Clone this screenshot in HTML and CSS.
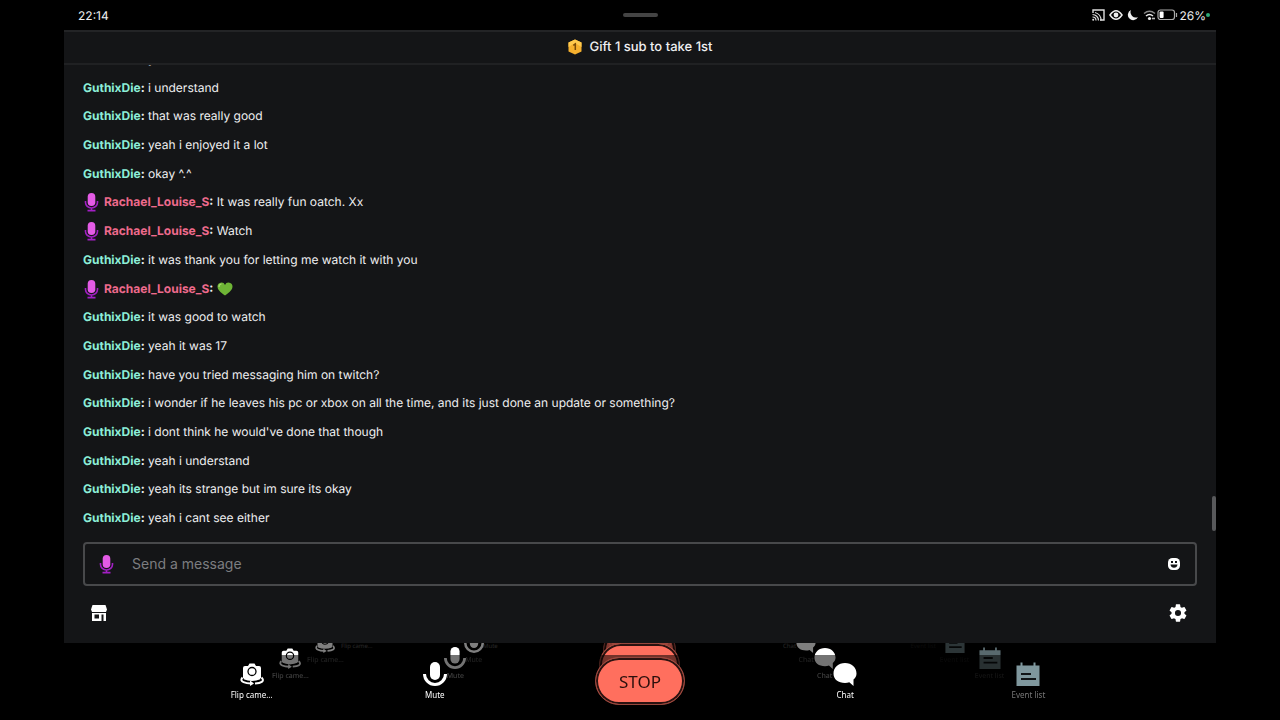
FILE: index.html
```html
<!DOCTYPE html>
<html lang="en">
<head>
    <meta charset="UTF-8">
    <meta name="viewport" content="width=device-width, initial-scale=1.0">
    <title>Stream Chat</title>
    <link rel="stylesheet" href="styles.css">
</head>
<body>
    <!-- Shared icons -->
    <svg class="sprite" aria-hidden="true">
        <symbol id="badge-mic" viewBox="0 0 16 20">
            <path d="M2 9v1.500a6 5.500 0 0 0 12 0V9M8 16v2.500M4 18.600h8" fill="none" stroke="#a21fc4" stroke-width="1.600"/>
            <rect x="4.200" y="1" width="7.600" height="13" rx="3.800" fill="#e45be6"/>
        </symbol>
        <symbol id="flip" viewBox="0 0 24 24">
            <path d="M5 4h3l1.500-2.500h5L16 4h3q2 0 2 2v11q-4.500 2-9 2t-9-2V6q0-2 2-2z" fill="currentColor"/>
            <circle cx="12" cy="9.500" r="4" fill="none" stroke="#000" stroke-width="1.300"/>
            <path d="M2.500 15.500c-4 4.500 4 6 9.500 6s13.500-1.500 9.500-6" fill="none" stroke="#000" stroke-width="4"/>
            <path d="M2.500 15.500c-4 4.500 4 6 8.500 6M21.500 15.500c4 4-1 5.500-6.500 6" fill="none" stroke="currentColor" stroke-width="2"/>
            <path d="M10 18.500l4 3-4 2.500z" fill="currentColor"/>
        </symbol>
        <symbol id="mic" viewBox="0 0 24 24">
            <rect x="7" y="0" width="10" height="18" rx="5" fill="currentColor"/>
            <path d="M1.500 12a10.500 10.500 0 0 0 21 0" fill="none" stroke="currentColor" stroke-width="3"/>
        </symbol>
        <symbol id="bubble" viewBox="0 0 24 24">
            <path d="M12 1C5.400 1 .5 5.500.5 11.500S5.400 21 12 21c1.500 0 3-.3 4.300-.7L20.500 24v-6.500c2-1.700 3-3.600 3-6C23.500 5.500 18.600 1 12 1z" fill="currentColor"/>
        </symbol>
        <symbol id="events" viewBox="0 0 24 24">
            <path d="M.5 3.500h4V.5h2v3h11v-3h2v3h4V24H.5z" fill="currentColor"/>
            <path d="M5 12h10M5 17h15" stroke="#101416" stroke-width="2"/>
        </symbol>
    </svg>

    <header class="status-bar">
        <time class="clock">22:14</time>
        <span class="handle"></span>
        <div class="status-icons">
            <svg width="13" height="12" viewBox="0 0 13 12" aria-label="Casting">
                <path d="M1 4V1h11v10H8" fill="none" stroke="#ddd" stroke-width="1.400"/>
                <path d="M.5 5.500a6 6 0 0 1 6 6M.5 8a3.500 3.500 0 0 1 3.500 3.500M3 3.500a8 8 0 0 1 6 8" fill="none" stroke="#ddd" stroke-width="1.200"/>
                <circle cx="1.200" cy="10.800" r="1" fill="#ddd"/>
            </svg>
            <svg width="14" height="12" viewBox="0 0 14 12" aria-label="Eye comfort">
                <path d="M1 6q6-8.500 12 0q-6 8.500-12 0z" fill="none" stroke="#eee" stroke-width="1.500"/>
                <circle cx="7" cy="6" r="2.400" fill="#eee"/>
            </svg>
            <svg width="12" height="12" viewBox="0 0 12 12" aria-label="Do not disturb">
                <path d="M4 1a5.300 5.300 0 1 0 7 7A5.300 5.300 0 0 1 4 1z" fill="#eee"/>
            </svg>
            <svg width="13" height="12" viewBox="0 0 13 12" aria-label="Wi-Fi">
                <path d="M1 4.500q5.500-4.500 11 0" fill="none" stroke="#888" stroke-width="1.400"/>
                <path d="M3 7q3.500-3 7 0" fill="none" stroke="#eee" stroke-width="1.500"/>
                <circle cx="6.500" cy="9.500" r="1.600" fill="#eee"/>
                <path d="M9 9.500h3" stroke="#bbb" stroke-width="1.600"/>
            </svg>
            <svg class="battery" width="21" height="12" viewBox="0 0 21 12" aria-label="Battery">
                <rect x="1" y="1" width="16.500" height="9.500" rx="2.500" fill="none" stroke="#aaa" stroke-width="1.200"/>
                <rect x="2.600" y="2.600" width="4" height="6.300" rx="1" fill="#fff"/>
                <path d="M19.500 4v4" stroke="#aaa" stroke-width="1.200"/>
            </svg>
            <span class="percent">26%</span>
            <span class="dot"></span>
        </div>
    </header>

    <main class="panel">
        <div class="gift-bar">
            <svg width="14" height="16" viewBox="0 0 14 16" aria-hidden="true">
                <path d="M7 .5l6.500 3v9L7 15.500.5 12.500v-9z" fill="#f6b02e"/>
                <path d="M7 .5l6.500 3v4.500L7 4 .5 8V3.500z" fill="#ffc94d"/>
                <path d="M5.300 6.300L7.300 5v6" fill="none" stroke="#7a4a08" stroke-width="1.500"/>
            </svg>
            <span>Gift 1 sub to take 1st</span>
        </div>

        <div class="chat-log">
            <ol class="messages">
                <li><b class="name guthix">GuthixDie</b><b>:</b> yes</li>
                <li><b class="name guthix">GuthixDie</b><b>:</b> i understand</li>
                <li><b class="name guthix">GuthixDie</b><b>:</b> that was really good</li>
                <li><b class="name guthix">GuthixDie</b><b>:</b> yeah i enjoyed it a lot</li>
                <li><b class="name guthix">GuthixDie</b><b>:</b> okay ^.^</li>
                <li><svg class="badge"><use href="#badge-mic"/></svg><b class="name rachael">Rachael_Louise_S</b><b>:</b> It was really fun oatch. Xx</li>
                <li><svg class="badge"><use href="#badge-mic"/></svg><b class="name rachael">Rachael_Louise_S</b><b>:</b> Watch</li>
                <li><b class="name guthix">GuthixDie</b><b>:</b> it was thank you for letting me watch it with you</li>
                <li><svg class="badge"><use href="#badge-mic"/></svg><b class="name rachael">Rachael_Louise_S</b><b>:</b>
                    <svg class="heart" viewBox="0 0 16 14" role="img" aria-label="green heart">
                        <path d="M8 13.500C3 10 .5 7.500.5 4.500a3.900 3.900 0 0 1 7.500-1.500 3.900 3.900 0 0 1 7.500 1.500c0 3-2.500 5.500-7.500 9z" fill="#6fb536"/>
                        <path d="M2 5q0-2.800 2.500-3" fill="none" stroke="#a3d86b" stroke-width="1.200"/>
                    </svg>
                </li>
                <li><b class="name guthix">GuthixDie</b><b>:</b> it was good to watch</li>
                <li><b class="name guthix">GuthixDie</b><b>:</b> yeah it was 17</li>
                <li><b class="name guthix">GuthixDie</b><b>:</b> have you tried messaging him on twitch?</li>
                <li><b class="name guthix">GuthixDie</b><b>:</b> i wonder if he leaves his pc or xbox on all the time, and its just done an update or something?</li>
                <li><b class="name guthix">GuthixDie</b><b>:</b> i dont think he would've done that though</li>
                <li><b class="name guthix">GuthixDie</b><b>:</b> yeah i understand</li>
                <li><b class="name guthix">GuthixDie</b><b>:</b> yeah its strange but im sure its okay</li>
                <li><b class="name guthix">GuthixDie</b><b>:</b> yeah i cant see either</li>
            </ol>
            <span class="scroll-thumb"></span>
        </div>

        <form class="composer">
            <svg class="badge"><use href="#badge-mic"/></svg>
            <input type="text" placeholder="Send a message" aria-label="Send a message">
            <button type="button" class="icon-button" aria-label="Emotes">
                <svg width="14" height="14" viewBox="0 0 14 14">
                    <rect x="1" y="1" width="12" height="12" rx="4.500" fill="#fff"/>
                    <rect x="4" y="4" width="2" height="2" fill="#141517"/>
                    <rect x="8" y="4" width="2" height="2" fill="#141517"/>
                    <path d="M3.500 7.500h7q-.5 3.200-3.500 3.200T3.500 7.500z" fill="#141517"/>
                </svg>
            </button>
        </form>

        <div class="tools">
            <button type="button" class="icon-button" aria-label="Store">
                <svg width="18" height="18" viewBox="0 0 18 18">
                    <path d="M2.500 1h13L17 5.500 16 8H2L1 5.500z" fill="#fff"/>
                    <path d="M2 9h14v8H2z" fill="#fff"/>
                    <path d="M4.500 10.500h4.500v4H4.500zM11.500 10.500h2V17h-2z" fill="#141517"/>
                    <path d="M2 8.500h14" stroke="#141517" stroke-dasharray="2 1.500"/>
                </svg>
            </button>
            <button type="button" class="icon-button" aria-label="Settings">
                <svg width="18" height="18" viewBox="2 2 20 20">
                    <path d="M19.140 12.940c.04-.3.060-.61.060-.94s-.02-.64-.07-.94l2.030-1.580a.49.490 0 0 0 .12-.61l-1.920-3.320a.49.490 0 0 0-.59-.22l-2.390.96c-.5-.38-1.030-.7-1.620-.94l-.36-2.540A.48.480 0 0 0 13.920 2.400h-3.840c-.24 0-.43.170-.47.410l-.36 2.540c-.59.240-1.130.57-1.620.94l-2.390-.96a.48.480 0 0 0-.59.220L2.740 8.870a.47.470 0 0 0 .12.610l2.030 1.580c-.05.300-.09.630-.09.940s.02.640.07.940l-2.030 1.580a.49.490 0 0 0-.12.610l1.920 3.320c.12.220.37.290.59.220l2.390-.96c.5.380 1.030.7 1.620.94l.36 2.540c.05.240.24.410.48.410h3.840c.24 0 .44-.17.470-.41l.36-2.540c.59-.24 1.130-.56 1.620-.94l2.390.96c.22.080.47 0 .59-.22l1.920-3.320a.47.470 0 0 0-.12-.61zM12 15.400a3.400 3.400 0 1 1 0-6.800 3.400 3.400 0 0 1 0 6.800z" fill="#fff"/>
                </svg>
            </button>
        </div>
    </main>

    <footer class="dock">
        <!-- Mirrored echoes of the controls, furthest first -->
        <div class="controls echo echo-3" aria-hidden="true">
            <div class="control"><svg><use href="#flip"/></svg><span>Flip came…</span></div>
            <div class="control"><svg><use href="#mic"/></svg><span>Mute</span></div>
            <div class="stop"></div>
            <div class="control"><svg><use href="#bubble"/></svg><span>Chat</span></div>
            <div class="control muted"><svg><use href="#events"/></svg><span>Event list</span></div>
        </div>
        <div class="controls echo echo-2" aria-hidden="true">
            <div class="control"><svg><use href="#flip"/></svg><span>Flip came…</span></div>
            <div class="control"><svg><use href="#mic"/></svg><span>Mute</span></div>
            <div class="stop">STOP</div>
            <div class="control"><svg><use href="#bubble"/></svg><span>Chat</span></div>
            <div class="control muted"><svg><use href="#events"/></svg><span>Event list</span></div>
        </div>
        <div class="controls echo echo-1" aria-hidden="true">
            <div class="control"><svg><use href="#flip"/></svg><span>Flip came…</span></div>
            <div class="control"><svg><use href="#mic"/></svg><span>Mute</span></div>
            <div class="stop">STOP</div>
            <div class="control"><svg><use href="#bubble"/></svg><span>Chat</span></div>
            <div class="control muted"><svg><use href="#events"/></svg><span>Event list</span></div>
        </div>
        <div class="shade"></div>

        <div class="controls front">
            <button type="button" class="control"><svg><use href="#flip"/></svg><span>Flip came…</span></button>
            <button type="button" class="control"><svg><use href="#mic"/></svg><span>Mute</span></button>
            <button type="button" class="stop">STOP</button>
            <button type="button" class="control"><svg><use href="#bubble"/></svg><span>Chat</span></button>
            <button type="button" class="control muted"><svg><use href="#events"/></svg><span>Event list</span></button>
        </div>
    </footer>
</body>
</html>
```
FILE: styles.css
```css
* {
    box-sizing: border-box;
}
body {
    display: flex;
    flex-direction: column;
    height: 100vh;
    margin: 0;
    overflow: hidden;
    background-color: #000;
    color: #efeff1;
    font-family: Inter, "Liberation Sans", sans-serif;
    font-size: 12px;
    text-rendering: geometricPrecision;
}
button {
    padding: 0;
    border: none;
    background: none;
    color: inherit;
    font: inherit;
    cursor: pointer;
}
.sprite {
    position: absolute;
    width: 0;
    height: 0;
}

/* Status bar */
.status-bar {
    display: grid;
    grid-template-columns: 1fr auto 1fr;
    align-items: center;
    height: 30px;
    padding: 0 70px;
}
.clock {
    padding-left: 8px;
}
.handle {
    width: 35px;
    height: 4px;
    border-radius: 2px;
    background-color: #444;
}
.status-icons {
    display: flex;
    align-items: center;
    justify-content: flex-end;
    gap: 4px;
}
.battery {
    margin: 0 -3px;
}
.dot {
    width: 4px;
    height: 4px;
    margin-left: -4px;
    border-radius: 50%;
    background-color: #2fa877;
}

/* Chat panel */
.panel {
    display: flex;
    flex: 1;
    flex-direction: column;
    min-height: 0;
    margin: 0 5%;
    background-color: #141517;
}
.gift-bar {
    display: flex;
    align-items: center;
    justify-content: center;
    gap: 8px;
    height: 35px;
    padding-bottom: 1px;
    border-top: 2px solid #232426;
    border-bottom: 2px solid #202123;
    font-size: 13px;
    font-weight: 500;
}
.chat-log {
    position: relative;
    display: flex;
    flex: 1;
    min-height: 0;
    overflow: hidden;
}
.messages {
    display: flex;
    flex: 1;
    flex-direction: column;
    justify-content: space-between;
    margin: -16px 0 0;
    padding: 0 19px 14px;
    list-style: none;
    line-height: 20px;
}
.messages li {
    height: 20px;
}
.name {
    font-weight: 700;
}
.guthix {
    color: #8ceed8;
}
.rachael {
    color: #ee6a8c;
}
.badge {
    width: 17px;
    height: 20px;
    margin-right: 4px;
    vertical-align: top;
}
.heart {
    width: 16px;
    height: 14px;
    vertical-align: middle;
}
.scroll-thumb {
    position: absolute;
    right: 0;
    bottom: 11px;
    width: 4px;
    height: 35px;
    border-radius: 2px;
    background-color: #58595b;
}
.composer {
    display: flex;
    align-items: center;
    height: 44px;
    margin: 0 19px;
    padding: 0 14px 0 13px;
    border: 2px solid #48494b;
    border-radius: 4px;
}
.composer .badge {
    margin-right: 17px;
}
.composer input {
    flex: 1;
    padding: 0 0 2px;
    border: none;
    outline: none;
    background: none;
    color: inherit;
    font: inherit;
    font-size: 14px;
}
.composer input::placeholder {
    color: #7c7d80;
}
.icon-button {
    display: flex;
}
.tools {
    display: flex;
    align-items: center;
    justify-content: space-between;
    height: 57px;
    padding: 0 29px 4px 26px;
}

/* Stream controls */
.dock {
    position: relative;
    height: 77px;
    overflow: hidden;
    font-family: "Noto Sans", sans-serif;
}
.controls {
    --icon: 24px;
    --label: 8px;
    display: grid;
    grid-template-columns: 183fr 183fr 227fr 183fr 183fr;
    align-items: center;
    justify-items: center;
    padding: 0 12.5%;
}
.control {
    display: flex;
    flex-direction: column;
    align-items: center;
    gap: 3px;
    color: #fff;
    font-size: var(--label);
    line-height: 12px;
    white-space: nowrap;
}
.control svg {
    width: var(--icon);
    height: var(--icon);
}
.muted svg {
    color: #7f979d;
}
.muted span {
    color: #777;
}
.stop {
    display: flex;
    align-items: center;
    justify-content: center;
    width: 90px;
    height: 48px;
    border: 1px solid #96463c;
    border-radius: 24px;
    background-color: #ff6f5e;
    box-shadow: inset 0 0 0 2px #2a1210;
    color: #2b0f0c;
    font-size: 17px;
}
.front {
    position: relative;
    margin-top: 14px;
}
.echo {
    position: absolute;
}
.echo .control {
    gap: 2px;
    line-height: 11px;
}
.echo .control span {
    opacity: 0.6;
}
.echo .muted {
    opacity: 0.7;
}
.echo-1 {
    --icon: 22px;
    --label: 7px;
    top: 0;
    left: 5%;
    right: 5%;
    padding: 0 11.25%;
}
.echo-1 .stop {
    width: 81px;
    height: 43px;
    font-size: 15px;
}
.echo-2 {
    --icon: 20px;
    --label: 7px;
    top: -13px;
    left: 9.5%;
    right: 9.5%;
    padding: 0 10.125%;
    opacity: 0.5;
}
.echo-2 .stop {
    width: 73px;
    height: 39px;
    font-size: 14px;
}
.echo-3 {
    --icon: 18px;
    --label: 6px;
    top: -24px;
    left: 13.55%;
    right: 13.55%;
    padding: 0 9.1125%;
    opacity: 0.25;
}
.echo-3 .stop {
    width: 66px;
    height: 35px;
}
.shade {
    position: absolute;
    top: 12px;
    right: 0;
    bottom: 0;
    left: 0;
    background-color: rgba(0, 0, 0, 0.55);
}
```
